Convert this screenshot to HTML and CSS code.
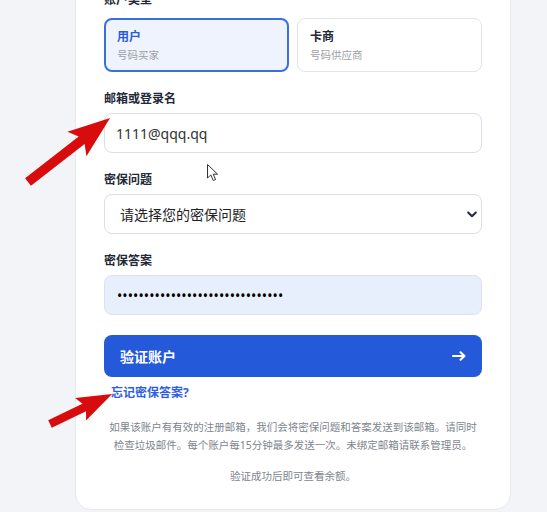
FILE: index.html
```html
<!DOCTYPE html>
<html lang="zh-CN">
<head>
<meta charset="utf-8">
<title>验证账户</title>
<link rel="stylesheet" href="styles.css">
</head>
<body>
<div class="page">
  <div class="card">
    <div class="label label-top">账户类型</div>
    <div class="types">
      <div class="type type-active">
        <div class="type-title">用户</div>
        <div class="type-sub">号码买家</div>
      </div>
      <div class="type">
        <div class="type-title">卡商</div>
        <div class="type-sub">号码供应商</div>
      </div>
    </div>

    <div class="field">
      <div class="label">邮箱或登录名</div>
      <input class="input" type="text" value="1111@qqq.qq">
    </div>

    <div class="field">
      <div class="label">密保问题</div>
      <div class="select-wrap">
        <select class="input select">
          <option>请选择您的密保问题</option>
        </select>
        <svg class="chev" width="10" height="7" viewBox="0 0 10 7"><path d="M1.2 1.5 L5 5.2 L8.8 1.5" fill="none" stroke="#1f2937" stroke-width="2" stroke-linecap="round" stroke-linejoin="round"/></svg>
      </div>
    </div>

    <div class="field">
      <div class="label">密保答案</div>
      <input class="input input-filled" type="password" value="aaaaaaaaaaaaaaaaaaaaaaaaaaaaaaa">
    </div>

    <button class="btn" type="button">
      <span>验证账户</span>
      <svg width="14" height="10" viewBox="0 0 14 10"><path d="M1 5 H12.5 M8.5 1.2 L12.5 5 L8.5 8.8" fill="none" stroke="#fff" stroke-width="2" stroke-linecap="round" stroke-linejoin="round"/></svg>
    </button>

    <a class="link" href="#">忘记密保答案?</a>

    <p class="note">如果该账户有有效的注册邮箱，我们会将密保问题和答案发送到该邮箱。请同时检查垃圾邮件。每个账户每15分钟最多发送一次。未绑定邮箱请联系管理员。</p>
    <p class="note note-last">验证成功后即可查看余额。</p>
  </div>
</div>

<svg class="overlay" width="547" height="512" viewBox="0 0 547 512">
  <g transform="translate(28 182) rotate(-37.9)">
    <polygon points="0,-4.8 68,-4.8 62,-15.5 104,0 62,15.5 68,4.8 0,4.8" fill="#d80c0c"/>
  </g>
  <g transform="translate(50 424) rotate(-25.8)">
    <polygon points="0,-4.2 38,-4.2 34,-12.5 69,0 34,12.5 38,4.2 0,4.2" fill="#d80c0c"/>
  </g>
  <g transform="translate(207 164)">
    <path d="M0.5 0.5 L0.5 14 L3.8 11 L6.3 16.5 L8.6 15.5 L6.2 10.2 L10.6 10.2 Z" fill="#fff" stroke="#333" stroke-width="1" stroke-linejoin="round"/>
  </g>
</svg>
</body>
</html>
```

FILE: styles.css
```css
* { box-sizing: border-box; }

html, body {
  margin: 0;
  padding: 0;
  background: #f3f4f8;
  height: 512px;
  overflow: hidden;
}

body {
  font-family: "Noto Sans", "Noto Sans CJK SC", sans-serif;
  color: #1f2937;
  position: relative;
}

.page {
  padding-left: 75px;
}

.card {
  width: 436px;
  margin-top: -40px;
  background: #fff;
  border: 1px solid #e6e8ee;
  border-radius: 16px;
  padding: 32px 28px 24px;
  display: flex;
  flex-direction: column;
}

.label {
  font-size: 12px;
  line-height: 14px;
  font-weight: 700;
  color: #1f2937;
  margin-bottom: 7px;
}

.label-top {
  margin-bottom: 11px;
}

.types {
  display: grid;
  grid-template-columns: 1fr 1fr;
  gap: 8px;
}

.type {
  height: 54px;
  border: 1px solid #dfe4ee;
  border-radius: 8px;
  padding: 10px 12px 9px;
  background: #fff;
}

.type-active {
  border: 2px solid #3a6ee3;
  background: #eef3fe;
  padding: 9px 11px 8px;
}

.type-title {
  font-size: 12px;
  line-height: 16px;
  font-weight: 700;
  color: #1f2937;
}

.type-active .type-title {
  color: #2a5bd7;
}

.type-sub {
  margin-top: 3px;
  font-size: 10.5px;
  line-height: 14px;
  color: #9ca0a8;
}

.field {
  margin-top: 20px;
  display: flex;
  flex-direction: column;
}

.input {
  width: 100%;
  height: 40px;
  border: 1px solid #d9dee8;
  border-radius: 8px;
  background: #fff;
  padding: 0 11px;
  font-family: "Noto Sans", "Noto Sans CJK SC", sans-serif;
  font-size: 14px;
  color: #333;
  outline: none;
}

.select-wrap {
  position: relative;
}

.select {
  appearance: none;
  -webkit-appearance: none;
  padding-left: 15px;
  color: #222;
}

.chev {
  position: absolute;
  right: 5px;
  top: 17px;
}

.input-filled {
  background: #e8effc;
  border-color: #dbe2ef;
  padding-left: 12px;
  color: #000;
  letter-spacing: 0.1px;
}

.btn {
  margin-top: 20px;
  height: 42px;
  width: 100%;
  border: 0;
  border-radius: 8px;
  background: #2459d9;
  color: #fff;
  display: flex;
  align-items: center;
  justify-content: space-between;
  padding: 0 16px 0 16px;
  font-family: "Noto Sans", "Noto Sans CJK SC", sans-serif;
  font-size: 14px;
  font-weight: 700;
}

.link {
  margin-top: 8px;
  margin-left: 7px;
  font-size: 12px;
  line-height: 16px;
  font-weight: 700;
  color: #2f5fe0;
  text-decoration: none;
  align-self: flex-start;
}

.note {
  margin: 17px 0 0;
  padding: 0 4px;
  font-size: 10.5px;
  line-height: 18px;
  color: #80858e;
  text-align: center;
}

.note-last {
  margin-top: 13px;
}

.overlay {
  position: absolute;
  top: 0;
  left: 0;
  pointer-events: none;
}
```
